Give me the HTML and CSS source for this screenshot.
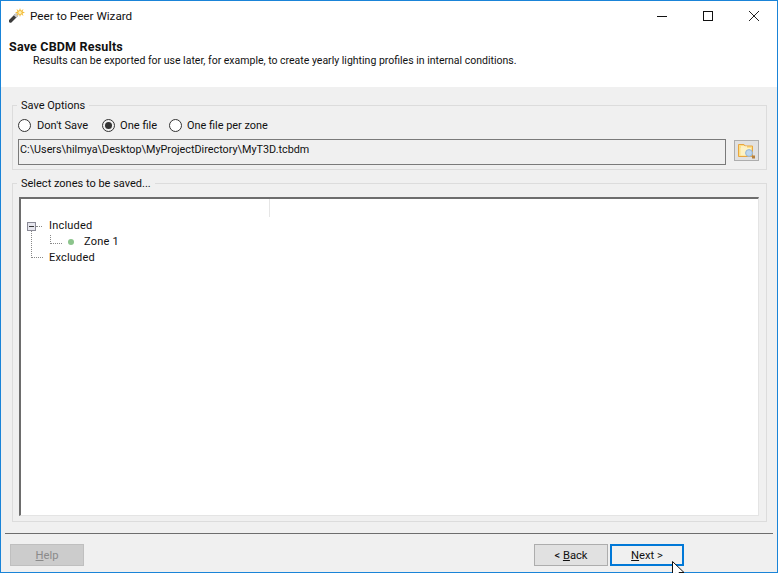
FILE: index.html
```html
<!DOCTYPE html>
<html lang="en">
<head>
<meta charset="utf-8">
<title>Peer to Peer Wizard</title>
<link rel="stylesheet" href="styles.css">
</head>
<body>
<div class="window">
  <div class="titlebar">
    <svg class="app-icon" width="16" height="16" viewBox="0 0 16 16">
      <path d="M1.5 13 L7 7.5" stroke="#3c3c3c" stroke-width="3.4" stroke-linecap="round"/>
      <path d="M6 8.5 L8.5 6" stroke="#c9c9c9" stroke-width="3.4"/>
      <path d="M11 0 L12 2.8 L14.5 1 L13.5 3.5 L16 4.5 L13.5 5.5 L14.5 8 L12 6.2 L11 9 L10 6.2 L7.5 8 L8.5 5.5 L6 4.5 L8.5 3.5 L7.5 1 L10 2.8Z" fill="#f3bd3c"/>
      <circle cx="11" cy="4.5" r="1.6" fill="#fff2b5"/>
    </svg>
    <span class="title">Peer to Peer Wizard</span>
    <div class="caption">
      <svg class="cap-btn" width="46" height="14" viewBox="0 0 46 14"><path d="M18 7.5H28" stroke="#111" stroke-width="1"/></svg>
      <svg class="cap-btn" width="46" height="14" viewBox="0 0 46 14"><rect x="18.5" y="2.5" width="9" height="9" fill="none" stroke="#111"/></svg>
      <svg class="cap-btn" width="46" height="14" viewBox="0 0 46 14"><path d="M18 2L28 12M28 2L18 12" stroke="#222" stroke-width="1"/></svg>
    </div>
  </div>
  <div class="header">
    <div class="h-title">Save CBDM Results</div>
    <div class="h-sub">Results can be exported for use later, for example, to create yearly lighting profiles in internal conditions.</div>
  </div>
  <div class="body">
    <fieldset class="group options">
      <legend>Save Options</legend>
      <div class="radios">
        <label class="radio r1"><span class="dot"></span>Don't Save</label>
        <label class="radio r2"><span class="dot on"></span>One file</label>
        <label class="radio r3"><span class="dot"></span>One file per zone</label>
      </div>
      <div class="path-row">
        <div class="path">C:\Users\hilmya\Desktop\MyProjectDirectory\MyT3D.tcbdm</div>
        <div class="browse">
          <svg width="18" height="16" viewBox="0 0 18 16">
            <path d="M0.5 1.5H6L7 3H14.5V13.5H0.5Z" fill="#fbe08a" stroke="#e9a53f"/>
            <path d="M2.5 5H13V12.5H2.5Z" fill="#fdf2c4"/>
            <path d="M3 4H9" stroke="#fff" stroke-width="1"/>
            <circle cx="11" cy="10" r="3.4" fill="#bcd6ee" stroke="#94b4d6"/>
            <rect x="14" y="12.5" width="3" height="3" fill="#b5803f"/>
          </svg>
        </div>
      </div>
    </fieldset>
    <fieldset class="group zones">
      <legend>Select zones to be saved...</legend>
      <div class="tree">
        <div class="tree-head"><span class="col"></span></div>
        <div class="node n-included"><span class="expander"></span><span class="dots-h"></span>Included</div>
        <div class="node n-zone"><span class="elbow"></span><span class="bullet"></span>Zone 1</div>
        <div class="node n-excluded"><span class="elbow long"></span>Excluded</div>
      </div>
    </fieldset>
  </div>
  <div class="footer">
    <button class="btn disabled"><u>H</u>elp</button>
    <div class="nav">
      <button class="btn back">&lt; <u>B</u>ack</button>
      <button class="btn next"><u>N</u>ext &gt;</button>
    </div>
    <svg class="cursor" width="13" height="13" viewBox="0 0 13 13"><path d="M0.5 0.5V15L4 12L6 17H9L7 11.5H12Z" fill="#fff" stroke="#111"/></svg>
  </div>
</div>
</body>
</html>
```
FILE: styles.css
```css
* { box-sizing: border-box; }
html, body { margin: 0; padding: 0; background: #fff; }
body {
  width: 778px;
  height: 573px;
  overflow: hidden;
  font-family: Roboto, "Liberation Sans", Arial, sans-serif;
  font-size: 11px;
  color: #111;
}
.window {
  position: relative;
  width: 778px;
  height: 573px;
  border: 1px solid #1a84d8;
  display: flex;
  flex-direction: column;
  background: #fff;
}
.titlebar {
  height: 29px;
  display: flex;
  align-items: center;
  padding-left: 8px;
  flex: none;
}
.app-icon { flex: none; }
.title { margin-left: 5px; font-size: 11.7px; }
.caption { margin-left: auto; display: flex; }
.cap-btn { display: block; }
.header { height: 57px; flex: none; padding: 9px 0 0 8px; }
.h-title { font-weight: bold; font-size: 12.5px; letter-spacing: 0.18px; line-height: 15px; }
.h-sub { margin-left: 24px; font-size: 10.5px; line-height: 13px; }
.body {
  flex: 1;
  background: #f0f0f0;
  padding: 11px 10px 0 11px;
  display: flex;
  flex-direction: column;
}
.group {
  margin: 0;
  border: 1px solid #dcdcdc;
  padding: 0;
  min-width: 0;
}
.group legend {
  height: 14px;
  padding: 0 4px;
  font-size: 11px;
  line-height: 16px;
}
.options { height: 72px; padding: 0 7px 0 5px; }
.options legend { margin-left: -1px; }
.radios { display: flex; height: 19px; align-items: center; margin-top: 4px; }
.radio { display: flex; align-items: center; font-size: 11.1px; }
.r1 { width: 84px; }
.r2 { width: 67px; }
.r3 { font-size: 10.9px; }
.dot {
  flex: none;
  width: 13px;
  height: 13px;
  border: 1px solid #333;
  border-radius: 50%;
  background: #fff;
  margin-right: 5px;
  display: flex;
  align-items: center;
  justify-content: center;
}
.r1 .dot { margin-right: 6px; }
.dot.on { background: #f0f0f0; }
.dot.on::after {
  content: "";
  width: 7px;
  height: 7px;
  border-radius: 50%;
  background: #333;
}
.path-row { display: flex; align-items: flex-start; margin-top: 4px; }
.path {
  width: 708px;
  height: 26px;
  border: 1px solid #7a7a7a;
  background: #f0f0f0;
  padding: 2px 0 0 1px;
  font-size: 10.8px;
  line-height: 16px;
  overflow: hidden;
  white-space: nowrap;
}
.browse {
  margin-left: 8px;
  margin-top: 1px;
  width: 25px;
  height: 21px;
  background: #e1e1e1;
  border: 1px solid #adadad;
  display: flex;
  align-items: center;
  justify-content: center;
}
.zones { height: 346px; margin-top: 6px; padding: 0 7px 0 6px; }
.zones legend { margin-left: -2px; }
.tree {
  height: 319px;
  margin-top: 7px;
  background: #fff;
  border-top: 2px solid #6d6d6d;
  border-left: 2px solid #6d6d6d;
  border-right: 1px solid #e4e4e4;
  border-bottom: 1px solid #e4e4e4;
  position: relative;
  padding-top: 18px;
  font-size: 11px;
  letter-spacing: 0.2px;
}
.tree-head { position: absolute; top: 0; left: 0; width: 249px; height: 18px; }
.col { position: absolute; top: 0; right: 0; width: 1px; height: 18px; background: #e6e6e6; }
.node { position: relative; height: 16px; line-height: 18px; white-space: nowrap; }
.n-included { padding-left: 28px; }
.n-zone { padding-left: 63px; }
.n-excluded { padding-left: 28px; }
.expander {
  position: absolute;
  left: 6px;
  top: 5px;
  width: 9px;
  height: 9px;
  background: #e6e6ee;
  border: 1px solid #8a8a96;
}
.expander::after {
  content: "";
  position: absolute;
  left: 1px;
  top: 3px;
  width: 5px;
  height: 1px;
  background: #333;
}
.dots-h {
  position: absolute;
  left: 15px;
  top: 9px;
  width: 6px;
  border-top: 1px dotted #888;
}
.elbow {
  position: absolute;
  left: 29px;
  top: 2px;
  width: 12px;
  height: 9px;
  border-left: 1px dotted #888;
  border-bottom: 1px dotted #888;
}
.elbow.long {
  left: 10px;
  top: -18px;
  width: 12px;
  height: 27px;
}
.bullet {
  position: absolute;
  left: 47px;
  top: 6px;
  width: 6px;
  height: 6px;
  border-radius: 50%;
  background: #8cc48c;
}
.footer {
  height: 39px;
  flex: none;
  background: #f0f0f0;
  padding: 11px 0 0 9px;
  display: flex;
  align-items: flex-start;
  position: relative;
}
.footer::before {
  content: "";
  position: absolute;
  left: 4px;
  right: 4px;
  top: 0;
  height: 1px;
  background: #6d6d6d;
}
.btn {
  width: 74px;
  height: 22px;
  padding: 0;
  background: #e1e1e1;
  border: 1px solid #adadad;
  font-family: Roboto, "Liberation Sans", Arial, sans-serif;
  font-size: 11.2px;
  color: #111;
}
.btn.disabled { background: #cccccc; border-color: #bfbfbf; color: #8a8a8a; }
.nav { margin-left: auto; margin-right: 93px; display: flex; gap: 2px; }
.btn.next { background: #f0f0f0; border: 2px solid #0078d7; }
.cursor { position: absolute; left: 671px; top: 28px; }
```
